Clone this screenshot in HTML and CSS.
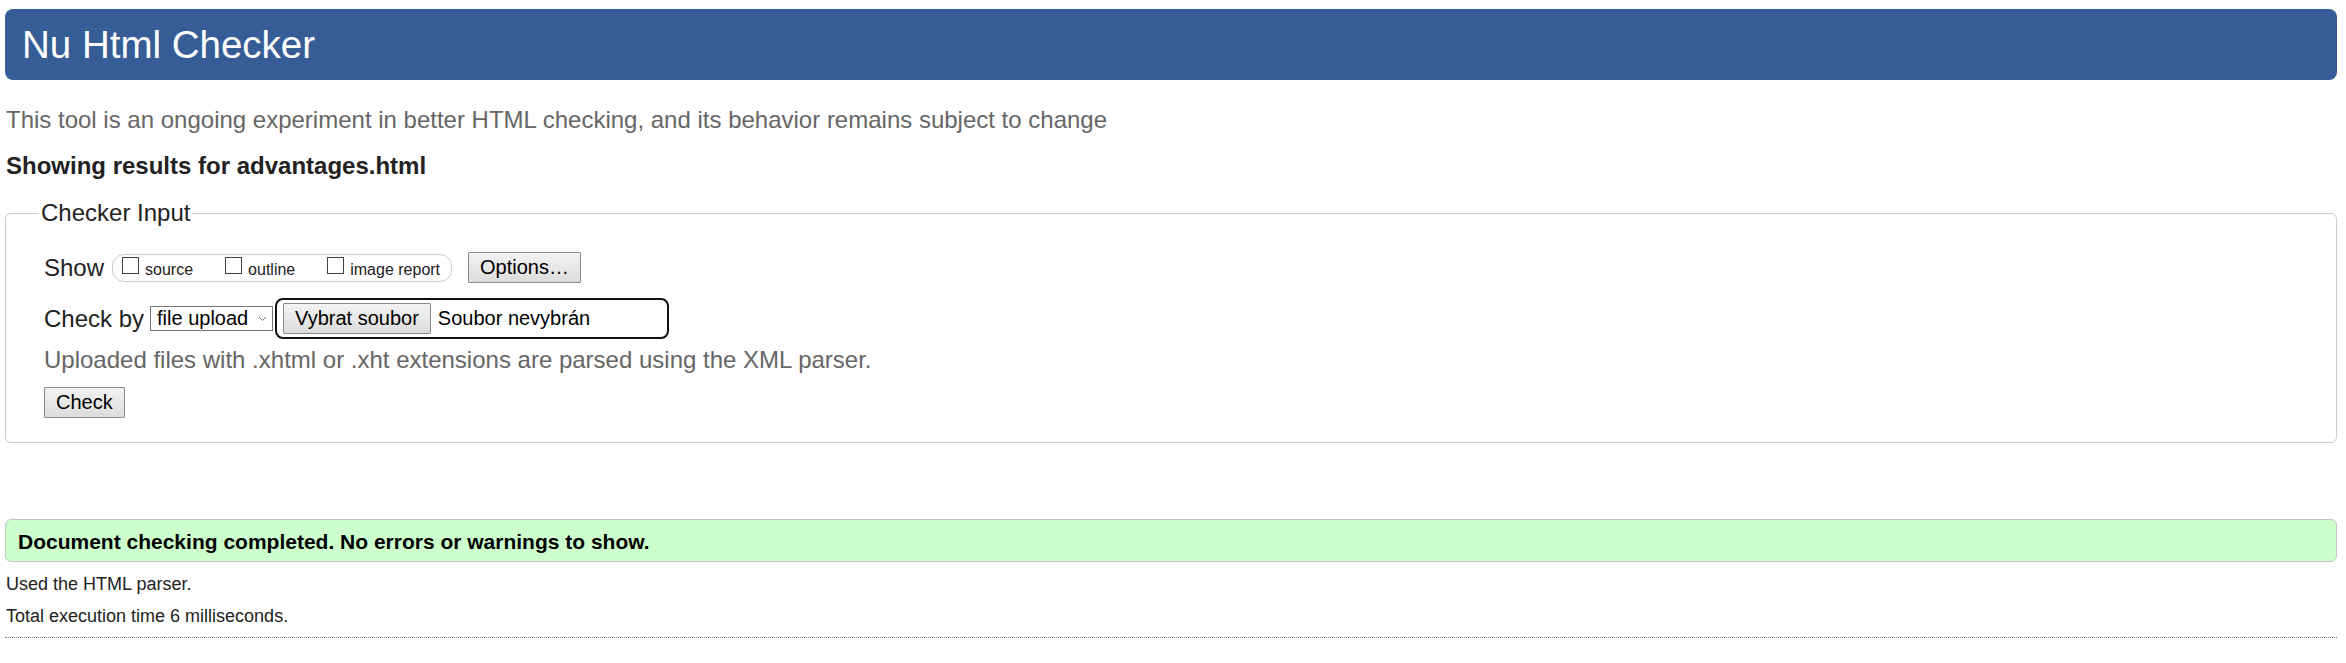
FILE: index.html
```html
<!DOCTYPE html>
<html lang="en">
<head>
<meta charset="utf-8">
<title>Showing results for advantages.html - Nu Html Checker</title>
<link rel="stylesheet" href="styles.css">
</head>
<body>
<h1 class="banner">Nu Html Checker</h1>
<p class="intro">This tool is an ongoing experiment in better HTML checking, and its behavior remains subject to change</p>
<h2 class="results-for">Showing results for advantages.html</h2>
<form class="checker-form">
  <fieldset class="checker-input">
    <legend class="checker-legend">Checker Input</legend>
    <div class="row row-show">
      <span class="row-label">Show</span>
      <span class="show-group">
        <label class="opt"><input type="checkbox" class="cb"><span class="opt-text">source</span></label>
        <label class="opt"><input type="checkbox" class="cb"><span class="opt-text">outline</span></label>
        <label class="opt"><input type="checkbox" class="cb"><span class="opt-text">image report</span></label>
      </span>
      <button type="button" class="btn btn-options">Options…</button>
    </div>
    <div class="row row-checkby">
      <span class="row-label">Check by</span>
      <span class="select-wrap">
        <select class="select"><option>file upload</option></select>
        <svg class="chevron" width="9" height="6" viewBox="0 0 9 6"><path d="M1 1 L4.5 4.5 L8 1" fill="none" stroke="#707070" stroke-width="1"/></svg>
      </span>
      <span class="file-picker">
        <button type="button" class="btn">Vybrat soubor</button>
        <span class="file-name">Soubor nevybrán</span>
      </span>
    </div>
    <p class="hint">Uploaded files with .xhtml or .xht extensions are parsed using the XML parser.</p>
    <div class="row row-submit">
      <button type="button" class="btn">Check</button>
    </div>
  </fieldset>
</form>
<p class="success">Document checking completed. No errors or warnings to show.</p>
<p class="stats">Used the HTML parser.</p>
<p class="stats stats-second">Total execution time 6 milliseconds.</p>
<hr class="divider">
</body>
</html>
```
FILE: styles.css
```css
html {
  background: #fff;
}
body {
  margin: 0;
  padding: 9px 9px 0 5px;
  font-family: "Liberation Sans", Arial, Helvetica, sans-serif;
  color: #222;
}
.banner {
  margin: 0;
  height: 71px;
  line-height: 71px;
  padding: 0 17px;
  font-size: 38.5px;
  font-weight: normal;
  color: #fff;
  background: #365d95;
  border-radius: 8px;
}
.intro {
  margin: 26px 0 0;
  padding-left: 1px;
  font-size: 24px;
  line-height: 28px;
  color: #666;
}
.results-for {
  margin: 18px 0 0;
  padding-left: 1px;
  font-size: 24px;
  line-height: 28px;
  font-weight: bold;
  color: #222;
}
.checker-form {
  margin: 0;
}
.checker-input {
  margin: 19px 0 0;
  padding: 25px 10px 24px 38px;
  border: 1px solid #cccccc;
  border-radius: 6px;
}
.checker-legend {
  margin-left: -5px;
  padding: 0 2px;
  font-size: 24px;
  line-height: 28px;
  color: #222;
}
.row {
  display: flex;
  align-items: center;
}
.row-show {
  height: 31px;
}
.row-checkby {
  margin-top: 15px;
  height: 41px;
}
.row-submit {
  margin-top: 13px;
}
.row-label {
  font-size: 24px;
  line-height: 28px;
  color: #222;
}
.show-group {
  display: flex;
  align-items: center;
  box-sizing: border-box;
  height: 28px;
  margin-left: 8px;
  padding: 0 11px 0 9px;
  border: 1px solid #cccccc;
  border-radius: 12px;
}
.opt {
  display: flex;
  align-items: flex-end;
  gap: 6px;
}
.opt + .opt {
  margin-left: 32px;
}
.cb {
  appearance: none;
  -webkit-appearance: none;
  box-sizing: border-box;
  width: 17px;
  height: 17px;
  margin: 0 0 5px;
  border: 1px solid #444;
  background: #fff;
  border-radius: 0;
}
.opt-text {
  font-size: 16px;
  line-height: 18px;
  color: #222;
}
.btn {
  box-sizing: border-box;
  height: 31px;
  margin: 0;
  padding: 0 11px;
  font-family: "Liberation Sans", Arial, Helvetica, sans-serif;
  font-size: 20px;
  line-height: 23px;
  color: #000;
  background: linear-gradient(#f3f3f3, #dcdcdc);
  border: 1px solid #8a8a8a;
  border-radius: 1px;
}
.btn-options {
  margin-left: 16px;
}
.select-wrap {
  position: relative;
  display: inline-block;
  margin-left: 6px;
  height: 25px;
}
.select {
  appearance: none;
  -webkit-appearance: none;
  box-sizing: border-box;
  width: 123px;
  height: 25px;
  margin: 0;
  padding: 0 0 0 6px;
  font-family: "Liberation Sans", Arial, Helvetica, sans-serif;
  font-size: 20px;
  line-height: 23px;
  color: #000;
  background: #fff;
  border: 1px solid #767676;
  border-radius: 0;
}
.chevron {
  position: absolute;
  right: 6px;
  top: 10px;
  pointer-events: none;
}
.file-picker {
  display: inline-flex;
  align-items: center;
  gap: 7px;
  box-sizing: border-box;
  width: 394px;
  height: 41px;
  margin-left: 2px;
  padding: 0 6px;
  border: 2px solid #111;
  border-radius: 8px;
}
.file-name {
  font-size: 20px;
  line-height: 23px;
  color: #000;
}
.hint {
  margin: 7px 0 0;
  font-size: 24px;
  line-height: 28px;
  color: #666;
}
.success {
  margin: 76px 0 0;
  padding: 10px 12px 7px;
  font-size: 21px;
  line-height: 24px;
  font-weight: bold;
  color: #000;
  background: #ccffcc;
  border: 1px solid #c4c4c4;
  border-radius: 6px;
}
.stats {
  margin: 12px 0 0;
  padding-left: 1px;
  font-size: 18px;
  line-height: 21px;
  color: #222;
}
.stats-second {
  margin-top: 11px;
}
.divider {
  margin: 10px 0 0;
  height: 0;
  border: 0;
  border-top: 1px dotted #777;
}
```
